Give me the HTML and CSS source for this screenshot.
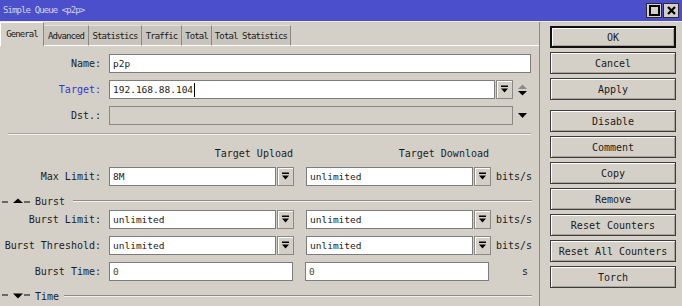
FILE: index.html
```html
<!DOCTYPE html>
<html lang="en">
<head>
    <meta charset="UTF-8">
    <title>Simple Queue &lt;p2p&gt;</title>
    <link rel="stylesheet" href="styles.css">
</head>
<body>
  <div class="titlebar">
    <span class="title">Simple Queue &lt;p2p&gt;</span>
    <div class="wbtns">
      <span class="wbtn">
        <svg width="13" height="13" viewBox="0 0 13 13"><rect x="2" y="2" width="9" height="9" fill="none" stroke="#000" stroke-width="2"/></svg>
      </span>
      <span class="wbtn">
        <svg width="13" height="13" viewBox="0 0 13 13"><path d="M3 3 L10 10 M10 3 L3 10" stroke="#000" stroke-width="2.2"/></svg>
      </span>
    </div>
  </div>

  <div class="content">
    <div class="main">
      <div class="tabs">
        <span class="tab active w-general">General</span>
        <span class="tab w-advanced">Advanced</span>
        <span class="tab w-stats">Statistics</span>
        <span class="tab w-traffic">Traffic</span>
        <span class="tab w-total">Total</span>
        <span class="tab w-totalstats">Total Statistics</span>
        <span class="tab-fill"></span>
      </div>

      <div class="panel">
        <!-- identity -->
        <div class="row">
          <label class="lbl">Name:</label>
          <div class="field w-name">p2p</div>
        </div>
        <div class="row">
          <label class="lbl blue">Target:</label>
          <div class="field w-target">192.168.88.104<span class="caret"></span></div>
          <span class="dd"><svg width="9" height="9" viewBox="0 0 9 9"><rect x="1" y="0.5" width="7" height="1.5" fill="#000"/><path d="M1 3.5 H8 L4.5 7.5 Z" fill="#000"/></svg></span>
          <span class="spin">
            <svg width="11" height="14" viewBox="0 0 11 14"><path d="M1 6 H10 L5.5 1.5 Z" fill="#8a8a8a"/><path d="M1 8 H10 L5.5 12.5 Z" fill="#000"/></svg>
          </span>
        </div>
        <div class="row">
          <label class="lbl">Dst.:</label>
          <div class="field disabled w-dst"></div>
          <span class="arrow"><svg width="11" height="7" viewBox="0 0 11 7"><path d="M1 1 H10 L5.5 6 Z" fill="#000"/></svg></span>
        </div>

        <div class="sep"></div>

        <div class="heads">
          <span class="head">Target Upload</span>
          <span class="head">Target Download</span>
        </div>

        <div class="row">
          <label class="lbl">Max Limit:</label>
          <div class="field w-half">8M</div>
          <span class="dd"><svg width="9" height="9" viewBox="0 0 9 9"><rect x="1" y="0.5" width="7" height="1.5" fill="#000"/><path d="M1 3.5 H8 L4.5 7.5 Z" fill="#000"/></svg></span>
          <div class="field w-half second">unlimited</div>
          <span class="dd"><svg width="9" height="9" viewBox="0 0 9 9"><rect x="1" y="0.5" width="7" height="1.5" fill="#000"/><path d="M1 3.5 H8 L4.5 7.5 Z" fill="#000"/></svg></span>
          <span class="unit">bits/s</span>
        </div>

        <!-- burst section -->
        <div class="section">
          <svg class="sec-icon" width="30" height="8" viewBox="0 0 30 8"><path d="M2 5 H8 M24 5 H30" stroke="#000" stroke-width="1"/><path d="M13 6 H23 L18 1.5 Z" fill="#000"/></svg>
          <span class="sec-name">Burst</span>
          <span class="sec-line"></span>
        </div>

        <div class="row">
          <label class="lbl">Burst Limit:</label>
          <div class="field w-half">unlimited</div>
          <span class="dd"><svg width="9" height="9" viewBox="0 0 9 9"><rect x="1" y="0.5" width="7" height="1.5" fill="#000"/><path d="M1 3.5 H8 L4.5 7.5 Z" fill="#000"/></svg></span>
          <div class="field w-half second">unlimited</div>
          <span class="dd"><svg width="9" height="9" viewBox="0 0 9 9"><rect x="1" y="0.5" width="7" height="1.5" fill="#000"/><path d="M1 3.5 H8 L4.5 7.5 Z" fill="#000"/></svg></span>
          <span class="unit">bits/s</span>
        </div>
        <div class="row">
          <label class="lbl">Burst Threshold:</label>
          <div class="field w-half">unlimited</div>
          <span class="dd"><svg width="9" height="9" viewBox="0 0 9 9"><rect x="1" y="0.5" width="7" height="1.5" fill="#000"/><path d="M1 3.5 H8 L4.5 7.5 Z" fill="#000"/></svg></span>
          <div class="field w-half second">unlimited</div>
          <span class="dd"><svg width="9" height="9" viewBox="0 0 9 9"><rect x="1" y="0.5" width="7" height="1.5" fill="#000"/><path d="M1 3.5 H8 L4.5 7.5 Z" fill="#000"/></svg></span>
          <span class="unit">bits/s</span>
        </div>
        <div class="row">
          <label class="lbl">Burst Time:</label>
          <div class="field w-full num">0</div>
          <div class="field w-full second num">0</div>
          <span class="unit right">s</span>
        </div>

        <!-- time section -->
        <div class="section">
          <svg class="sec-icon" width="30" height="8" viewBox="0 0 30 8"><path d="M2 3 H8 M24 3 H30" stroke="#000" stroke-width="1"/><path d="M13 1.5 H23 L18 6.5 Z" fill="#000"/></svg>
          <span class="sec-name">Time</span>
          <span class="sec-line short"></span>
        </div>
      </div>
    </div>

    <div class="side">
      <button class="btn default">OK</button>
      <button class="btn">Cancel</button>
      <button class="btn">Apply</button>
      <button class="btn gap">Disable</button>
      <button class="btn">Comment</button>
      <button class="btn">Copy</button>
      <button class="btn">Remove</button>
      <button class="btn">Reset Counters</button>
      <button class="btn">Reset All Counters</button>
      <button class="btn">Torch</button>
    </div>
  </div>
</body>
</html>
```

FILE: styles.css
```css
* {
  box-sizing: border-box;
}

body {
  margin: 0;
  width: 682px;
  height: 306px;
  overflow: hidden;
  background-color: #d4d0c8;
  font-family: "DejaVu Sans Mono", monospace;
  font-size: 10px;
  color: #1c1c1c;
}

/* title bar */
.titlebar {
  height: 22px;
  background-color: #4b4fcc;
  border-bottom: 1px solid #ecebe6;
  display: flex;
  align-items: center;
  justify-content: space-between;
  padding: 0 3px 1px 3px;
}

.title {
  color: #d6d6dc;
  font-size: 9px;
  letter-spacing: -0.9px;
}

.wbtns {
  display: flex;
  gap: 1px;
}

.wbtn {
  width: 16px;
  height: 15px;
  background-color: #d4d0c8;
  border: 1px solid #2a2a2a;
  display: flex;
  align-items: center;
  justify-content: center;
}

/* layout */
.content {
  display: flex;
  height: 284px;
}

.main {
  width: 540px;
  border-right: 1px solid #8c8a84;
}

.side {
  padding: 4px 0 0 10px;
  display: flex;
  flex-direction: column;
}

/* tabs */
.tabs {
  display: flex;
  align-items: flex-end;
  height: 24px;
}

.tab {
  height: 21px;
  display: flex;
  align-items: center;
  justify-content: center;
  background-color: #c9c5bd;
  border-top: 1px solid #e4e2dc;
  border-right: 1px solid #8a8882;
  border-bottom: 1px solid #ffffff;
  font-size: 9px;
  letter-spacing: -0.9px;
  color: #1a1a1a;
}

.tab.active {
  height: 24px;
  background-color: #d4d0c8;
  border-top: 1px solid #ffffff;
  border-left: 1px solid #ffffff;
  border-bottom: none;
  padding-bottom: 1px;
}

.w-general { width: 44px; }
.w-advanced { width: 45px; }
.w-stats { width: 53px; }
.w-traffic { width: 40px; }
.w-total { width: 30px; }
.w-totalstats { width: 79px; }

.tab-fill {
  flex: 1;
  border-bottom: 1px solid #ffffff;
}

/* form */
.panel {
  padding-top: 8px;
  display: flex;
  flex-direction: column;
}

.row {
  display: flex;
  align-items: center;
  height: 19px;
  margin-bottom: 7px;
  flex-shrink: 0;
}

.lbl {
  width: 103px;
  padding-right: 2px;
  margin-right: 6px;
  text-align: right;
  white-space: nowrap;
}

.lbl.blue {
  color: #3434d2;
}

.field {
  height: 19px;
  background-color: #ffffff;
  border: 1px solid #7c7c7c;
  padding-left: 3px;
  display: flex;
  align-items: center;
  font-size: 9.5px;
  color: #1a1a1a;
}

.field.disabled {
  background-color: #d4d0c8;
  border-color: #8a8882;
}

.field.num {
  color: #5a4a28;
}

.caret {
  display: inline-block;
  width: 1px;
  height: 14px;
  background-color: #000;
  margin-left: 1px;
}

.w-name { width: 422px; }
.w-target { width: 386px; }
.w-dst { width: 404px; }
.w-half { width: 167px; }
.w-full { width: 184px; }

.second {
  margin-left: 12px;
}

.dd {
  width: 17px;
  height: 19px;
  margin-left: 1px;
  background-color: #d4d0c8;
  border: 1px solid #8a8882;
  box-shadow: inset 1px 1px 0 #ffffff;
  display: flex;
  align-items: center;
  justify-content: center;
}

.spin {
  margin-left: 4px;
  display: flex;
  align-items: center;
}

.arrow {
  margin-left: 4px;
  display: flex;
  align-items: center;
}

.unit {
  margin-left: 5px;
}

.unit.right {
  flex: 1;
  text-align: right;
  padding-right: 11px;
}

.sep {
  margin: 1px 8px 0 8px;
  height: 2px;
  flex-shrink: 0;
  border-top: 1px solid #a9a59d;
  border-bottom: 1px solid #f4f2ee;
}

.heads {
  display: flex;
  height: 12px;
  align-items: center;
  margin-top: 12px;
  margin-bottom: 8px;
}

.head {
  text-align: right;
}

.head:first-child {
  width: 293px;
}

.head:last-child {
  width: 196px;
}

/* collapsible sections */
.section {
  display: flex;
  align-items: center;
  height: 10px;
  flex-shrink: 0;
  margin-top: 3px;
  margin-bottom: 4px;
}

.sec-icon {
  flex-shrink: 0;
}

.sec-name {
  margin-left: 5px;
}

.sec-line {
  flex: 1;
  margin: 0 7px 0 8px;
  height: 2px;
  border-top: 1px solid #8f8c86;
  border-bottom: 1px solid #f4f2ee;
}

.sec-line.short {
  margin-left: 5px;
}

/* side buttons */
.btn {
  width: 126px;
  height: 22px;
  margin-bottom: 4px;
  padding: 0;
  background-color: #d4d0c8;
  border: 1px solid #3c3c3c;
  box-shadow: inset 1px 1px 0 #ffffff, inset -1px -1px 0 #a8a49c;
  font-family: "DejaVu Sans Mono", monospace;
  font-size: 10px;
  color: #1a1a1a;
}

.btn.default {
  border: 2px solid #101010;
}

.btn.gap {
  margin-top: 6px;
}
```
